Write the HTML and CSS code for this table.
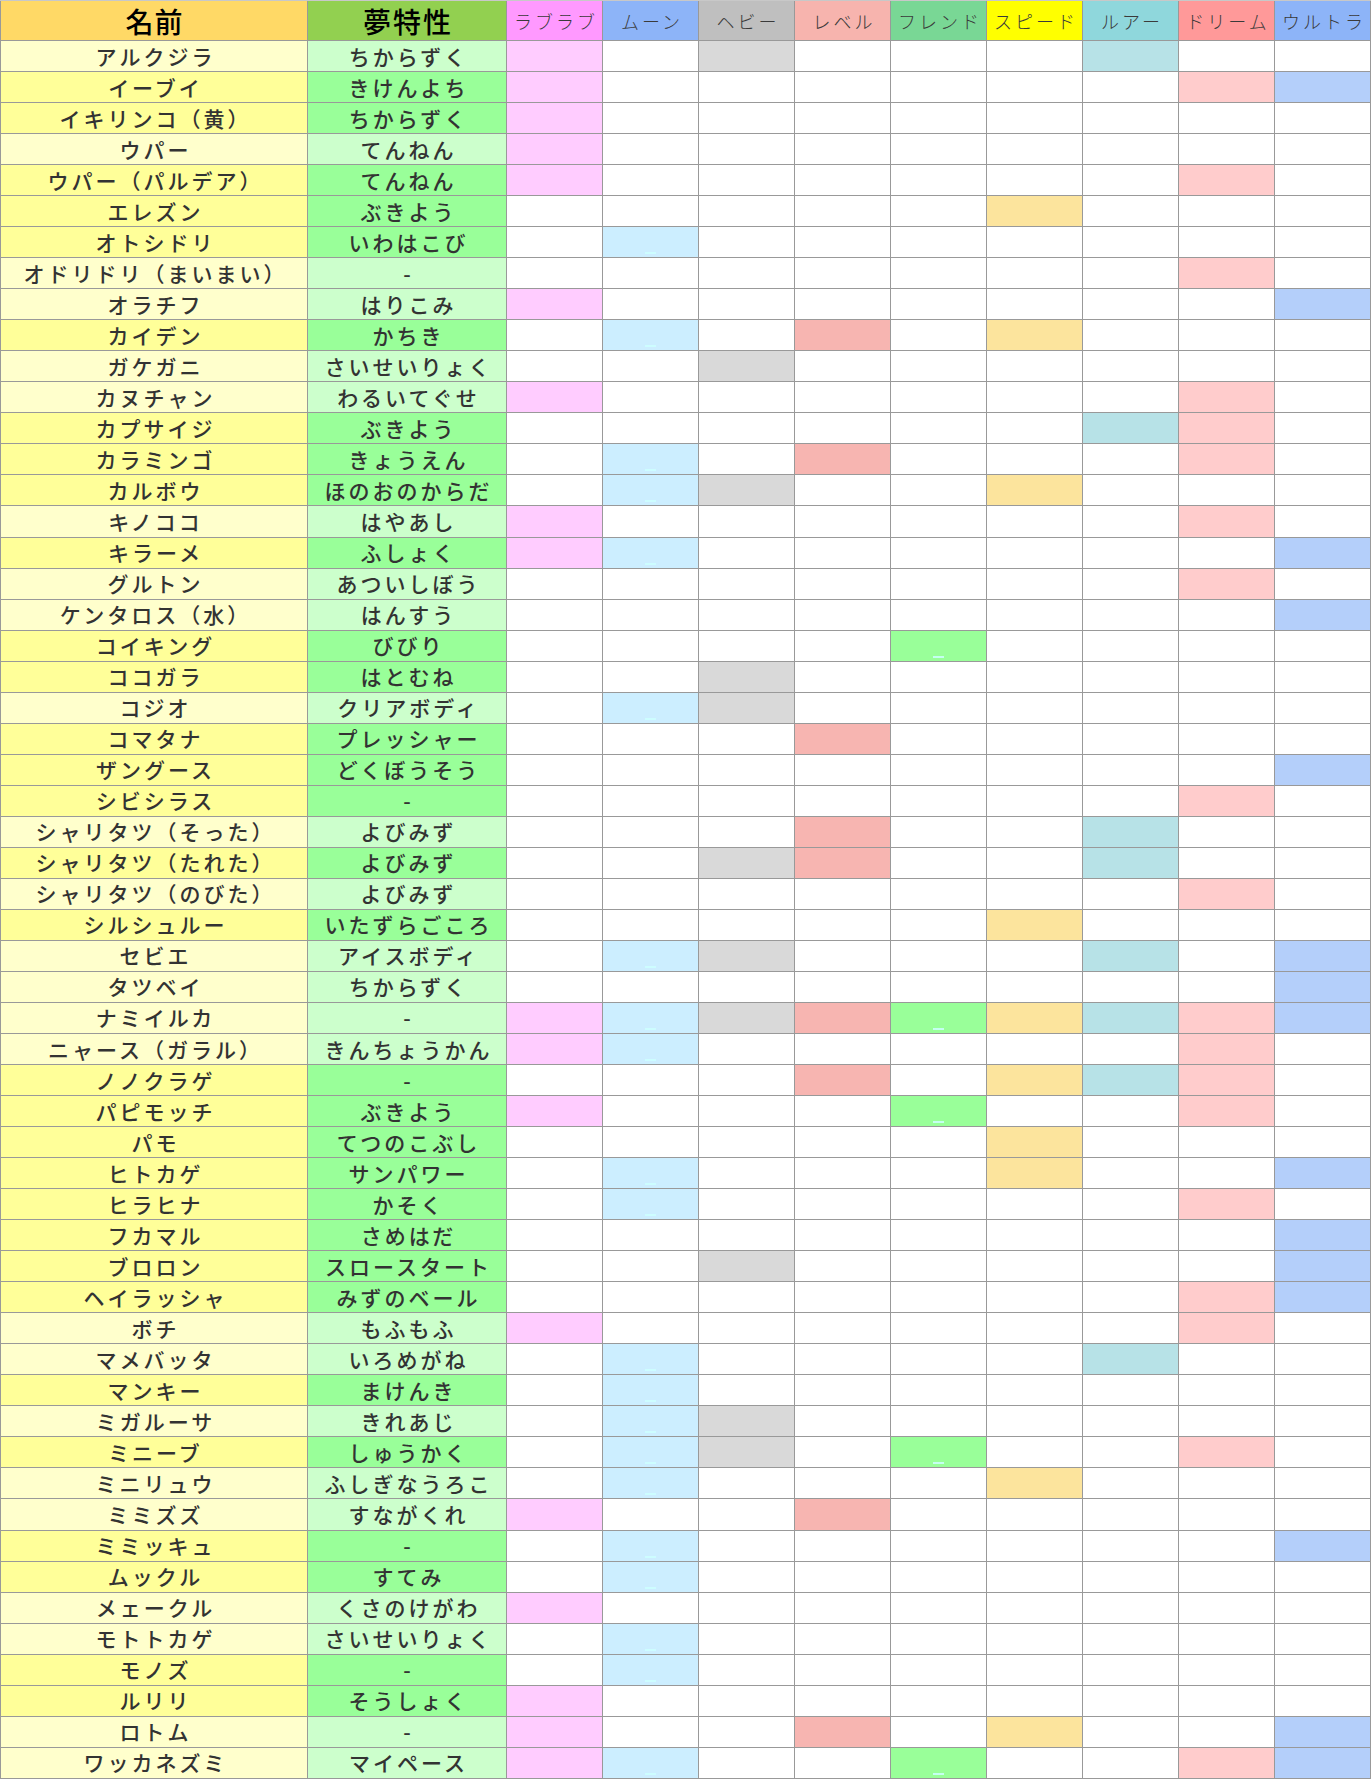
FILE: index.html
```html
<!DOCTYPE html>
<html lang="ja">
<head>
<meta charset="utf-8">
<title>ボール一覧</title>
<link rel="stylesheet" href="styles.css">
</head>
<body>
<div class="sheet">
  <div class="h h-name">名前</div>
  <div class="h h-abil">夢特性</div>
  <div class="h hb h-l">ラブラブ</div>
  <div class="h hb h-m">ムーン</div>
  <div class="h hb h-h">ヘビー</div>
  <div class="h hb h-lv">レベル</div>
  <div class="h hb h-f">フレンド</div>
  <div class="h hb h-s">スピード</div>
  <div class="h hb h-r">ルアー</div>
  <div class="h hb h-d">ドリーム</div>
  <div class="h hb h-u">ウルトラ</div>

  <div class="n">アルクジラ</div><div class="a">ちからずく</div>
  <div class="c l"></div><div class="c"></div><div class="c hv"></div><div class="c"></div><div class="c"></div><div class="c"></div><div class="c r"></div><div class="c"></div><div class="c"></div>

  <div class="n dk">イーブイ</div><div class="a dk">きけんよち</div>
  <div class="c l"></div><div class="c"></div><div class="c"></div><div class="c"></div><div class="c"></div><div class="c"></div><div class="c"></div><div class="c d"></div><div class="c u"></div>

  <div class="n dk">イキリンコ（黄）</div><div class="a dk">ちからずく</div>
  <div class="c l"></div><div class="c"></div><div class="c"></div><div class="c"></div><div class="c"></div><div class="c"></div><div class="c"></div><div class="c"></div><div class="c"></div>

  <div class="n">ウパー</div><div class="a">てんねん</div>
  <div class="c l"></div><div class="c"></div><div class="c"></div><div class="c"></div><div class="c"></div><div class="c"></div><div class="c"></div><div class="c"></div><div class="c"></div>

  <div class="n dk">ウパー（パルデア）</div><div class="a dk">てんねん</div>
  <div class="c l"></div><div class="c"></div><div class="c"></div><div class="c"></div><div class="c"></div><div class="c"></div><div class="c"></div><div class="c d"></div><div class="c"></div>

  <div class="n dk">エレズン</div><div class="a dk">ぶきよう</div>
  <div class="c"></div><div class="c"></div><div class="c"></div><div class="c"></div><div class="c"></div><div class="c s"></div><div class="c"></div><div class="c"></div><div class="c"></div>

  <div class="n dk">オトシドリ</div><div class="a dk">いわはこび</div>
  <div class="c"></div><div class="c m"><i class="mk"></i></div><div class="c"></div><div class="c"></div><div class="c"></div><div class="c"></div><div class="c"></div><div class="c"></div><div class="c"></div>

  <div class="n">オドリドリ（まいまい）</div><div class="a">-</div>
  <div class="c"></div><div class="c"></div><div class="c"></div><div class="c"></div><div class="c"></div><div class="c"></div><div class="c"></div><div class="c d"></div><div class="c"></div>

  <div class="n">オラチフ</div><div class="a">はりこみ</div>
  <div class="c l"></div><div class="c"></div><div class="c"></div><div class="c"></div><div class="c"></div><div class="c"></div><div class="c"></div><div class="c"></div><div class="c u"></div>

  <div class="n dk">カイデン</div><div class="a dk">かちき</div>
  <div class="c"></div><div class="c m"><i class="mk"></i></div><div class="c"></div><div class="c lv"></div><div class="c"></div><div class="c s"></div><div class="c"></div><div class="c"></div><div class="c"></div>

  <div class="n">ガケガニ</div><div class="a">さいせいりょく</div>
  <div class="c"></div><div class="c"></div><div class="c hv"></div><div class="c"></div><div class="c"></div><div class="c"></div><div class="c"></div><div class="c"></div><div class="c"></div>

  <div class="n">カヌチャン</div><div class="a">わるいてぐせ</div>
  <div class="c l"></div><div class="c"></div><div class="c"></div><div class="c"></div><div class="c"></div><div class="c"></div><div class="c"></div><div class="c d"></div><div class="c"></div>

  <div class="n dk">カプサイジ</div><div class="a dk">ぶきよう</div>
  <div class="c"></div><div class="c"></div><div class="c"></div><div class="c"></div><div class="c"></div><div class="c"></div><div class="c r"></div><div class="c d"></div><div class="c"></div>

  <div class="n dk">カラミンゴ</div><div class="a dk">きょうえん</div>
  <div class="c"></div><div class="c m"><i class="mk"></i></div><div class="c"></div><div class="c lv"></div><div class="c"></div><div class="c"></div><div class="c"></div><div class="c d"></div><div class="c"></div>

  <div class="n dk">カルボウ</div><div class="a dk">ほのおのからだ</div>
  <div class="c"></div><div class="c m"><i class="mk"></i></div><div class="c hv"></div><div class="c"></div><div class="c"></div><div class="c s"></div><div class="c"></div><div class="c"></div><div class="c"></div>

  <div class="n">キノココ</div><div class="a">はやあし</div>
  <div class="c l"></div><div class="c"></div><div class="c"></div><div class="c"></div><div class="c"></div><div class="c"></div><div class="c"></div><div class="c d"></div><div class="c"></div>

  <div class="n dk">キラーメ</div><div class="a dk">ふしょく</div>
  <div class="c l"></div><div class="c m"><i class="mk"></i></div><div class="c"></div><div class="c"></div><div class="c"></div><div class="c"></div><div class="c"></div><div class="c"></div><div class="c u"></div>

  <div class="n">グルトン</div><div class="a">あついしぼう</div>
  <div class="c"></div><div class="c"></div><div class="c"></div><div class="c"></div><div class="c"></div><div class="c"></div><div class="c"></div><div class="c d"></div><div class="c"></div>

  <div class="n">ケンタロス（水）</div><div class="a">はんすう</div>
  <div class="c"></div><div class="c"></div><div class="c"></div><div class="c"></div><div class="c"></div><div class="c"></div><div class="c"></div><div class="c"></div><div class="c u"></div>

  <div class="n dk">コイキング</div><div class="a dk">びびり</div>
  <div class="c"></div><div class="c"></div><div class="c"></div><div class="c"></div><div class="c f"><i class="mk"></i></div><div class="c"></div><div class="c"></div><div class="c"></div><div class="c"></div>

  <div class="n dk">ココガラ</div><div class="a dk">はとむね</div>
  <div class="c"></div><div class="c"></div><div class="c hv"></div><div class="c"></div><div class="c"></div><div class="c"></div><div class="c"></div><div class="c"></div><div class="c"></div>

  <div class="n">コジオ</div><div class="a">クリアボディ</div>
  <div class="c"></div><div class="c m"><i class="mk"></i></div><div class="c hv"></div><div class="c"></div><div class="c"></div><div class="c"></div><div class="c"></div><div class="c"></div><div class="c"></div>

  <div class="n dk">コマタナ</div><div class="a dk">プレッシャー</div>
  <div class="c"></div><div class="c"></div><div class="c"></div><div class="c lv"></div><div class="c"></div><div class="c"></div><div class="c"></div><div class="c"></div><div class="c"></div>

  <div class="n dk">ザングース</div><div class="a dk">どくぼうそう</div>
  <div class="c"></div><div class="c"></div><div class="c"></div><div class="c"></div><div class="c"></div><div class="c"></div><div class="c"></div><div class="c"></div><div class="c u"></div>

  <div class="n dk">シビシラス</div><div class="a dk">-</div>
  <div class="c"></div><div class="c"></div><div class="c"></div><div class="c"></div><div class="c"></div><div class="c"></div><div class="c"></div><div class="c d"></div><div class="c"></div>

  <div class="n">シャリタツ（そった）</div><div class="a">よびみず</div>
  <div class="c"></div><div class="c"></div><div class="c"></div><div class="c lv"></div><div class="c"></div><div class="c"></div><div class="c r"></div><div class="c"></div><div class="c"></div>

  <div class="n dk">シャリタツ（たれた）</div><div class="a dk">よびみず</div>
  <div class="c"></div><div class="c"></div><div class="c hv"></div><div class="c lv"></div><div class="c"></div><div class="c"></div><div class="c r"></div><div class="c"></div><div class="c"></div>

  <div class="n">シャリタツ（のびた）</div><div class="a">よびみず</div>
  <div class="c"></div><div class="c"></div><div class="c"></div><div class="c"></div><div class="c"></div><div class="c"></div><div class="c"></div><div class="c d"></div><div class="c"></div>

  <div class="n dk">シルシュルー</div><div class="a dk">いたずらごころ</div>
  <div class="c"></div><div class="c"></div><div class="c"></div><div class="c"></div><div class="c"></div><div class="c s"></div><div class="c"></div><div class="c"></div><div class="c"></div>

  <div class="n">セビエ</div><div class="a">アイスボディ</div>
  <div class="c"></div><div class="c m"><i class="mk"></i></div><div class="c hv"></div><div class="c"></div><div class="c"></div><div class="c"></div><div class="c r"></div><div class="c"></div><div class="c u"></div>

  <div class="n">タツベイ</div><div class="a">ちからずく</div>
  <div class="c"></div><div class="c"></div><div class="c"></div><div class="c"></div><div class="c"></div><div class="c"></div><div class="c"></div><div class="c"></div><div class="c u"></div>

  <div class="n">ナミイルカ</div><div class="a">-</div>
  <div class="c l"></div><div class="c m"><i class="mk"></i></div><div class="c hv"></div><div class="c lv"></div><div class="c f"><i class="mk"></i></div><div class="c s"></div><div class="c r"></div><div class="c d"></div><div class="c u"></div>

  <div class="n">ニャース（ガラル）</div><div class="a">きんちょうかん</div>
  <div class="c l"></div><div class="c m"><i class="mk"></i></div><div class="c"></div><div class="c"></div><div class="c"></div><div class="c"></div><div class="c"></div><div class="c d"></div><div class="c"></div>

  <div class="n dk">ノノクラゲ</div><div class="a dk">-</div>
  <div class="c"></div><div class="c"></div><div class="c"></div><div class="c lv"></div><div class="c"></div><div class="c s"></div><div class="c r"></div><div class="c d"></div><div class="c"></div>

  <div class="n dk">パピモッチ</div><div class="a dk">ぶきよう</div>
  <div class="c l"></div><div class="c"></div><div class="c"></div><div class="c"></div><div class="c f"><i class="mk"></i></div><div class="c"></div><div class="c"></div><div class="c d"></div><div class="c"></div>

  <div class="n dk">パモ</div><div class="a dk">てつのこぶし</div>
  <div class="c"></div><div class="c"></div><div class="c"></div><div class="c"></div><div class="c"></div><div class="c s"></div><div class="c"></div><div class="c"></div><div class="c"></div>

  <div class="n dk">ヒトカゲ</div><div class="a dk">サンパワー</div>
  <div class="c"></div><div class="c m"><i class="mk"></i></div><div class="c"></div><div class="c"></div><div class="c"></div><div class="c s"></div><div class="c"></div><div class="c"></div><div class="c u"></div>

  <div class="n dk">ヒラヒナ</div><div class="a dk">かそく</div>
  <div class="c"></div><div class="c m"><i class="mk"></i></div><div class="c"></div><div class="c"></div><div class="c"></div><div class="c"></div><div class="c"></div><div class="c d"></div><div class="c"></div>

  <div class="n dk">フカマル</div><div class="a dk">さめはだ</div>
  <div class="c"></div><div class="c"></div><div class="c"></div><div class="c"></div><div class="c"></div><div class="c"></div><div class="c"></div><div class="c"></div><div class="c u"></div>

  <div class="n dk">ブロロン</div><div class="a dk">スロースタート</div>
  <div class="c"></div><div class="c"></div><div class="c hv"></div><div class="c"></div><div class="c"></div><div class="c"></div><div class="c"></div><div class="c"></div><div class="c u"></div>

  <div class="n dk">ヘイラッシャ</div><div class="a dk">みずのベール</div>
  <div class="c"></div><div class="c"></div><div class="c"></div><div class="c"></div><div class="c"></div><div class="c"></div><div class="c"></div><div class="c d"></div><div class="c u"></div>

  <div class="n">ボチ</div><div class="a">もふもふ</div>
  <div class="c l"></div><div class="c"></div><div class="c"></div><div class="c"></div><div class="c"></div><div class="c"></div><div class="c"></div><div class="c d"></div><div class="c"></div>

  <div class="n">マメバッタ</div><div class="a">いろめがね</div>
  <div class="c"></div><div class="c m"><i class="mk"></i></div><div class="c"></div><div class="c"></div><div class="c"></div><div class="c"></div><div class="c r"></div><div class="c"></div><div class="c"></div>

  <div class="n dk">マンキー</div><div class="a dk">まけんき</div>
  <div class="c"></div><div class="c m"><i class="mk"></i></div><div class="c"></div><div class="c"></div><div class="c"></div><div class="c"></div><div class="c"></div><div class="c"></div><div class="c"></div>

  <div class="n">ミガルーサ</div><div class="a">きれあじ</div>
  <div class="c"></div><div class="c m"><i class="mk"></i></div><div class="c hv"></div><div class="c"></div><div class="c"></div><div class="c"></div><div class="c"></div><div class="c"></div><div class="c"></div>

  <div class="n dk">ミニーブ</div><div class="a dk">しゅうかく</div>
  <div class="c"></div><div class="c m"><i class="mk"></i></div><div class="c hv"></div><div class="c"></div><div class="c f"><i class="mk"></i></div><div class="c"></div><div class="c"></div><div class="c d"></div><div class="c"></div>

  <div class="n">ミニリュウ</div><div class="a">ふしぎなうろこ</div>
  <div class="c"></div><div class="c m"><i class="mk"></i></div><div class="c"></div><div class="c"></div><div class="c"></div><div class="c s"></div><div class="c"></div><div class="c"></div><div class="c"></div>

  <div class="n">ミミズズ</div><div class="a">すながくれ</div>
  <div class="c l"></div><div class="c"></div><div class="c"></div><div class="c lv"></div><div class="c"></div><div class="c"></div><div class="c"></div><div class="c"></div><div class="c"></div>

  <div class="n dk">ミミッキュ</div><div class="a dk">-</div>
  <div class="c"></div><div class="c m"><i class="mk"></i></div><div class="c"></div><div class="c"></div><div class="c"></div><div class="c"></div><div class="c"></div><div class="c"></div><div class="c u"></div>

  <div class="n dk">ムックル</div><div class="a dk">すてみ</div>
  <div class="c"></div><div class="c m"><i class="mk"></i></div><div class="c"></div><div class="c"></div><div class="c"></div><div class="c"></div><div class="c"></div><div class="c"></div><div class="c"></div>

  <div class="n">メェークル</div><div class="a">くさのけがわ</div>
  <div class="c l"></div><div class="c"></div><div class="c"></div><div class="c"></div><div class="c"></div><div class="c"></div><div class="c"></div><div class="c"></div><div class="c"></div>

  <div class="n">モトトカゲ</div><div class="a">さいせいりょく</div>
  <div class="c"></div><div class="c m"><i class="mk"></i></div><div class="c"></div><div class="c"></div><div class="c"></div><div class="c"></div><div class="c"></div><div class="c"></div><div class="c"></div>

  <div class="n dk">モノズ</div><div class="a dk">-</div>
  <div class="c"></div><div class="c m"><i class="mk"></i></div><div class="c"></div><div class="c"></div><div class="c"></div><div class="c"></div><div class="c"></div><div class="c"></div><div class="c"></div>

  <div class="n dk">ルリリ</div><div class="a dk">そうしょく</div>
  <div class="c l"></div><div class="c"></div><div class="c"></div><div class="c"></div><div class="c"></div><div class="c"></div><div class="c"></div><div class="c"></div><div class="c"></div>

  <div class="n">ロトム</div><div class="a">-</div>
  <div class="c l"></div><div class="c"></div><div class="c"></div><div class="c lv"></div><div class="c"></div><div class="c s"></div><div class="c"></div><div class="c"></div><div class="c u"></div>

  <div class="n">ワッカネズミ</div><div class="a">マイペース</div>
  <div class="c l"></div><div class="c m"><i class="mk"></i></div><div class="c"></div><div class="c"></div><div class="c f"><i class="mk"></i></div><div class="c"></div><div class="c"></div><div class="c d"></div><div class="c u"></div>
</div>
</body>
</html>
```
FILE: styles.css
```css
html, body {
  margin: 0;
  padding: 0;
  background: #ffffff;
}

body {
  font-family: "Noto Sans CJK JP", "Noto Sans", sans-serif;
  color: #333333;
}

.sheet {
  display: grid;
  grid-template-columns: 306px 198px repeat(9, 95px);
  grid-template-rows: 39px repeat(56, 30.04px);
  gap: 1px;
  width: 1371px;
  box-sizing: border-box;
  padding: 0 1px 1px 1px;
  border-top: 1px solid #c8c8c8;
  background: #999999;
}

.h,
.n,
.a {
  display: flex;
  align-items: center;
  justify-content: center;
  white-space: nowrap;
  overflow: hidden;
}

/* header row */
.h-name,
.h-abil {
  font-size: 28px;
  font-weight: 500;
  color: #000000;
  line-height: 1;
}
.h-name { background: #ffd966; letter-spacing: 1px; padding-left: 1px; }
.h-abil { background: #92d050; letter-spacing: 2px; padding-left: 2px; }

.hb {
  font-size: 18px;
  font-weight: 300;
  letter-spacing: 3px;
  padding-left: 3px;
  color: #3a3a3a;
  line-height: 1;
}
.h-l  { background: #ff99ff; }
.h-m  { background: #8db4f8; }
.h-h  { background: #bfbfbf; }
.h-lv { background: #f7b4ae; }
.h-f  { background: #79d795; }
.h-s  { background: #ffff00; }
.h-r  { background: #8fd7dc; }
.h-d  { background: #ff9999; }
.h-u  { background: #8db4f8; }

/* body rows */
.n,
.a {
  font-size: 21px;
  font-weight: 500;
  letter-spacing: 3px;
  padding-left: 3px;
  line-height: 1;
  color: #333333;
}
.n { background: #ffffcc; }
.n.dk { background: #ffff99; }
.a { background: #ccffcc; }
.a.dk { background: #99ff99; }

.c {
  background: #ffffff;
  display: flex;
  justify-content: center;
  align-items: flex-end;
  padding-bottom: 3px;
  box-sizing: border-box;
}
.c.l  { background: #ffccff; }
.c.m  { background: #cceeff; }
.c.hv { background: #d9d9d9; }
.c.lv { background: #f7b5b1; }
.c.f  { background: #99ff99; }
.c.s  { background: #fce49d; }
.c.r  { background: #b7e2e7; }
.c.d  { background: #ffcccc; }
.c.u  { background: #b4cffa; }

.mk {
  display: block;
  width: 11px;
  height: 2px;
  background: rgba(204, 255, 255, 0.85);
}
```
